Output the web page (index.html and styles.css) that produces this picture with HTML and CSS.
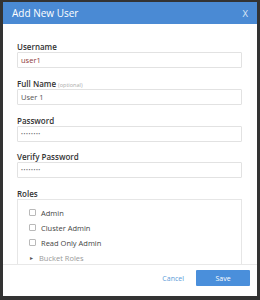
FILE: index.html
```html
<!DOCTYPE html>
<html lang="en">
<head>
  <meta charset="UTF-8">
  <title>Add New User</title>
  <link rel="stylesheet" href="styles.css">
</head>
<body>
  <div class="dialog">
    <!-- header -->
    <div class="dialog-header">
      <span class="dialog-title">Add New User</span>
      <button class="btn-close">X</button>
    </div>

    <div class="dialog-body">
      <div class="field">
        <label class="field-label">Username</label>
        <div class="input input-user">user1</div>
      </div>
      <div class="field">
        <label class="field-label">Full Name <span class="optional">(optional)</span></label>
        <div class="input">User 1</div>
      </div>
      <div class="field">
        <label class="field-label">Password</label>
        <div class="input input-secret">••••••••</div>
      </div>
      <div class="field">
        <label class="field-label">Verify Password</label>
        <div class="input input-secret">••••••••</div>
      </div>
      <div class="field">
        <label class="field-label">Roles</label>
        <div class="roles-box">
          <div class="role-item"><span class="checkbox"></span>Admin</div>
          <div class="role-item"><span class="checkbox"></span>Cluster Admin</div>
          <div class="role-item"><span class="checkbox"></span>Read Only Admin</div>
          <div class="role-item role-group"><span class="caret">&#9656;</span>Bucket Roles</div>
        </div>
      </div>
    </div>

    <!-- footer -->
    <div class="dialog-footer">
      <button class="btn-cancel">Cancel</button>
      <button class="btn-save">Save</button>
    </div>
  </div>
</body>
</html>
```

FILE: styles.css
```css
body {
  margin: 0;
  background: #333;
  font-family: "Open Sans", "Noto Sans", sans-serif;
  color: #333;
  height: 300px;
  overflow: hidden;
}
.dialog {
  margin: 2px 3px 0 3px;
  width: 254px;
  height: 294px;
  background: #fff;
  display: flex;
  flex-direction: column;
  overflow: hidden;
}
.dialog-header {
  background-color: #4a8ad4;
  height: 22px;
  display: flex;
  align-items: center;
  justify-content: space-between;
  padding: 0 9px 0 9px;
  flex-shrink: 0;
}
.dialog-title {
  color: #fff;
  font-size: 10px;
  font-weight: 400;
}
.btn-close {
  background: none;
  border: none;
  padding: 0;
  color: #dce7f6;
  font-family: inherit;
  font-size: 9.5px;
  cursor: pointer;
}
.dialog-body {
  flex: 1;
  overflow: hidden;
  padding: 17px 15px 0 14px;
}

/* form fields */
.field {
  margin-bottom: 10px;
}
.field:nth-child(3) {
  margin-bottom: 9px;
}
.field-label {
  display: block;
  font-size: 8px;
  font-weight: 600;
  line-height: 11px;
  height: 11px;
  color: #333;
}
.optional {
  font-size: 5.5px;
  font-weight: 400;
  line-height: 1;
  color: #aaa;
}
.input {
  height: 16px;
  box-sizing: border-box;
  border: 1px solid #e2e2e2;
  border-radius: 1px;
  padding: 0 3px;
  font-size: 7.5px;
  line-height: 14px;
  color: #555;
}
.input-user {
  color: #8e3b3b;
}
.input-secret {
  font-size: 5px;
  letter-spacing: 0.6px;
  color: #666;
}

/* roles list */
.roles-box {
  border: 1px solid #e6e6e6;
  padding: 5px 10px;
  height: 100px;
}
.role-item {
  display: flex;
  align-items: center;
  height: 15px;
  font-size: 7.5px;
  color: #444;
}
.checkbox {
  width: 5px;
  height: 5px;
  border: 1px solid #b9b9b9;
  border-radius: 1px;
  margin: 0 5px 0 1px;
}
.role-group {
  color: #999;
}
.caret {
  font-size: 6px;
  color: #555;
  width: 9px;
  padding-left: 2px;
  box-sizing: border-box;
  margin-right: 2px;
}

/* footer */
.dialog-footer {
  border-top: 1px solid #e8e8e8;
  height: 26px;
  flex-shrink: 0;
  display: flex;
  align-items: flex-start;
  justify-content: flex-end;
  padding: 5px 7px 0 0;
  gap: 12px;
}
.btn-cancel {
  background: none;
  border: none;
  color: #5b9bd8;
  font-family: inherit;
  font-size: 7px;
  height: 16px;
  padding: 0;
  cursor: pointer;
}
.btn-save {
  background-color: #4a8fdb;
  color: #fff;
  border: none;
  border-radius: 1px;
  width: 54px;
  height: 16px;
  font-family: inherit;
  font-size: 7px;
  padding: 0;
  cursor: pointer;
}
```
